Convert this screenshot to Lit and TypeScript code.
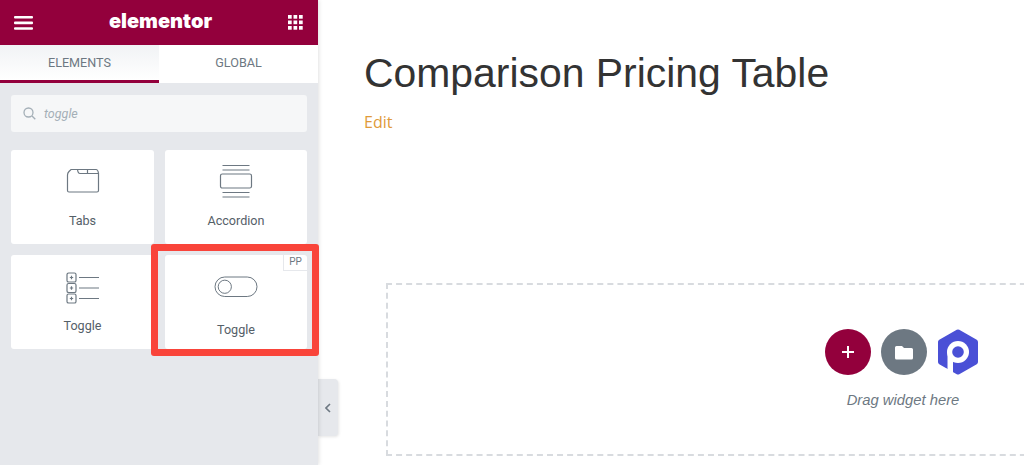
import { LitElement, html, css, svg } from "lit";
import { customElement } from "lit/decorators.js";

const tabsIcon = html`<svg viewBox="0 0 34 26" width="34" height="26" fill="none" stroke="#6d7882" stroke-width="1.2">
  <path d="M1.5 7 Q1.5 5 3 3.5 L5 1.5 H11.5 Q12 5.5 14 5.5 H32.5 V22.5 Q32.5 24 31 24 H3 Q1.5 24 1.5 22.5 Z"/>
  <path d="M11.5 1.5 H30 Q32 1.5 32.5 5.5 M21.5 1.5 V5.5"/>
</svg>`;
const accIcon = html`<svg viewBox="0 0 34 34" width="34" height="34" fill="none" stroke="#6d7882" stroke-width="1.2">
  <path d="M3.5 1.5 H30.5 M3.5 6 H30.5 M3.5 28.5 H30.5 M3.5 33 H30.5"/>
  <rect x="1.5" y="10" width="31" height="14" rx="1.8"/>
</svg>`;
const plusBox = (y: number) => svg`<rect x="1" y="${y}" width="9" height="9" rx="1.6"/><path d="M3.8 ${y + 4.5} H7.2 M5.5 ${y + 2.8} V${y + 6.2}"/>`;
const toggleListIcon = html`<svg viewBox="0 0 34 32" width="34" height="32" fill="none" stroke="#6d7882" stroke-width="1.2">
  ${plusBox(1)}${plusBox(11.5)}${plusBox(22)}
  <path d="M13 5.5 H33 M13 16 H33 M13 26.5 H33"/>
</svg>`;
const switchIcon = html`<svg viewBox="0 0 44 22" width="44" height="22" fill="none" stroke="#6d7882" stroke-width="1">
  <rect x="1" y="1" width="42" height="19.5" rx="9.75"/>
  <circle cx="10.8" cy="10.75" r="6.6"/>
</svg>`;

@customElement("app-root")
export class AppRoot extends LitElement {
  static styles = css`
    :host { display: flex; width: 1024px; height: 465px; overflow: hidden; background: #fff; font-family: "Roboto", "Liberation Sans", sans-serif; position: relative; }
    .panel { width: 318px; flex: none; background: #e6e8ec; box-shadow: 1px 0 4px rgba(0,0,0,.12); display: flex; flex-direction: column; position: relative; z-index: 2; }
    .top { height: 45px; background: #93003c; color: #fff; display: flex; align-items: center; justify-content: space-between; padding: 0 15px 0 14px; }
    .logo { font-family: "Inter", "Liberation Sans", sans-serif; font-weight: 900; font-size: 20px; line-height: 1; margin-top: -3px; }
    .tabs { display: flex; height: 38px; background: #fff; }
    .tab { flex: 1; display: flex; align-items: center; justify-content: center; font-size: 12.6px; color: #6d7882; padding-bottom: 3px; box-sizing: border-box; }
    .tab.on { background: linear-gradient(#f1f3f5, #fff); border-bottom: 3px solid #93003c; padding-bottom: 0; height: 38px; }
    .search { margin: 12px 11px 0; height: 37px; background: #f6f7f8; border-radius: 3px; display: flex; align-items: center; gap: 8px; padding-left: 12px; color: #a4afb7; font-style: italic; font-size: 12.5px; }
    .grid { display: grid; grid-template-columns: 143px 142px; grid-auto-rows: 93.5px; gap: 11.5px 11px; margin: 18px 11px 0; }
    .card { background: #fff; border-radius: 3px; display: flex; flex-direction: column; align-items: center; color: #556068; font-size: 12.6px; position: relative; }
    .ico { display: flex; align-items: flex-end; justify-content: center; }
    .lbl { line-height: 14px; }
    .c1 .ico { height: 44px; } .c1 .lbl { margin-top: 20px; }
    .c2 .ico { height: 48px; } .c2 .lbl { margin-top: 16px; }
    .c3 .ico { height: 49px; } .c3 .lbl { margin-top: 15px; }
    .c4 .ico { height: 43px; } .c4 .lbl { margin-top: 25px; }
    .badge { position: absolute; top: 0; right: 0; width: 23px; height: 15px; border-left: 1px solid #e6e8ec; border-bottom: 1px solid #e6e8ec; font-size: 10px; line-height: 14px; text-align: center; color: #6d7882; border-top-right-radius: 3px; }
    .red { position: absolute; left: 151px; top: 244px; width: 168px; height: 112px; box-sizing: border-box; border: 7px solid #f9443a; border-radius: 3px; z-index: 3; pointer-events: none; }
    .handle { position: absolute; left: 318px; top: 379px; width: 20px; height: 57px; background: #e6e8ec; border-radius: 0 4px 4px 0; box-shadow: 1px 1px 3px rgba(0,0,0,.1); display: flex; align-items: center; justify-content: center; z-index: 1; }
    .main { flex: 1; padding: 45px 0 0 46px; min-width: 0; }
    h1 { margin: 0; font: 400 40.9px/56px "Liberation Sans", Arial, sans-serif; color: #333; white-space: nowrap; }
    .edit { display: block; margin-top: 10px; font: 400 16px/22px "Open Sans", sans-serif; color: #e09a3a; }
    .drop { margin: 150px 0 0 22px; width: 660px; height: 173px; box-sizing: border-box; border: 2px dashed #d8dbdf; display: flex; flex-direction: column; align-items: center; padding-top: 44px; padding-left: 371px; }
    .btns { display: flex; align-items: center; gap: 10px; }
    .round { width: 46px; height: 46px; border-radius: 50%; display: flex; align-items: center; justify-content: center; }
    .plus { background: #93003c; } .folder { background: #6d7882; }
    .hint { margin-top: 15px; font: italic 400 14.8px/20px "Liberation Sans", Arial, sans-serif; color: #6d7882; margin-left: 3px; white-space: nowrap; }
  `;

  render() {
    return html`
      <aside class="panel">
        <header class="top">
          <svg width="19" height="14" viewBox="0 0 19 14" fill="#fff"><rect width="19" height="2.6" y="0" rx="1"/><rect width="19" height="2.6" y="5.6" rx="1"/><rect width="19" height="2.6" y="11.2" rx="1"/></svg>
          <span class="logo">elementor</span>
          <svg width="15" height="15" viewBox="0 0 15 15" fill="#fff">
            ${[0, 5.5, 11].flatMap((y) => [0, 5.5, 11].map((x) => svg`<rect x="${x}" y="${y}" width="3.7" height="3.7"/>`))}
          </svg>
        </header>
        <nav class="tabs"><div class="tab on">ELEMENTS</div><div class="tab">GLOBAL</div></nav>
        <div class="search">
          <svg width="13" height="13" viewBox="0 0 13 13" fill="none" stroke="#a4afb7" stroke-width="1.3"><circle cx="5.5" cy="5.5" r="4.5"/><path d="M9 9 L12.3 12.3"/></svg>
          <span>toggle</span>
        </div>
        <div class="grid">
          <div class="card c1"><div class="ico">${tabsIcon}</div><div class="lbl">Tabs</div></div>
          <div class="card c2"><div class="ico">${accIcon}</div><div class="lbl">Accordion</div></div>
          <div class="card c3"><div class="ico">${toggleListIcon}</div><div class="lbl">Toggle</div></div>
          <div class="card c4"><span class="badge">PP</span><div class="ico">${switchIcon}</div><div class="lbl">Toggle</div></div>
        </div>
      </aside>
      <div class="handle"><svg width="6" height="10" viewBox="0 0 6 10" fill="none" stroke="#6d7882" stroke-width="1.6"><path d="M5 1 L1 5 L5 9"/></svg></div>
      <div class="red"></div>
      <main class="main">
        <h1>Comparison Pricing Table</h1>
        <a class="edit">Edit</a>
        <section class="drop">
          <div class="btns">
            <div class="round plus"><svg width="14" height="14" viewBox="0 0 14 14" stroke="#fff" stroke-width="2"><path d="M7 1 V13 M1 7 H13"/></svg></div>
            <div class="round folder"><svg width="18" height="15" viewBox="0 0 18 15" fill="#fff"><path d="M1.5 1 H7 L9 3 H16.5 Q18 3 18 4.5 V13 Q18 14.5 16.5 14.5 H1.5 Q0 14.5 0 13 V2.5 Q0 1 1.5 1 Z"/></svg></div>
            <svg width="42" height="46" viewBox="0 0 42 46">
              <path fill="#4a50d6" stroke="#4a50d6" stroke-width="5" stroke-linejoin="round" d="M21 3 L38.5 13 V33 L21 43 L3.5 33 V13 Z"/>
              <circle cx="21" cy="23" r="11" fill="#fff"/>
              <path fill="#fff" d="M10.5 23 H16 V46 H10.5 Z"/>
              <path fill="#fff" d="M0 37 L10.5 40 V46 H0 Z"/>
              <circle cx="21" cy="23" r="5.8" fill="#4a50d6"/>
            </svg>
          </div>
          <div class="hint">Drag widget here</div>
        </section>
      </main>
    `;
  }
}
